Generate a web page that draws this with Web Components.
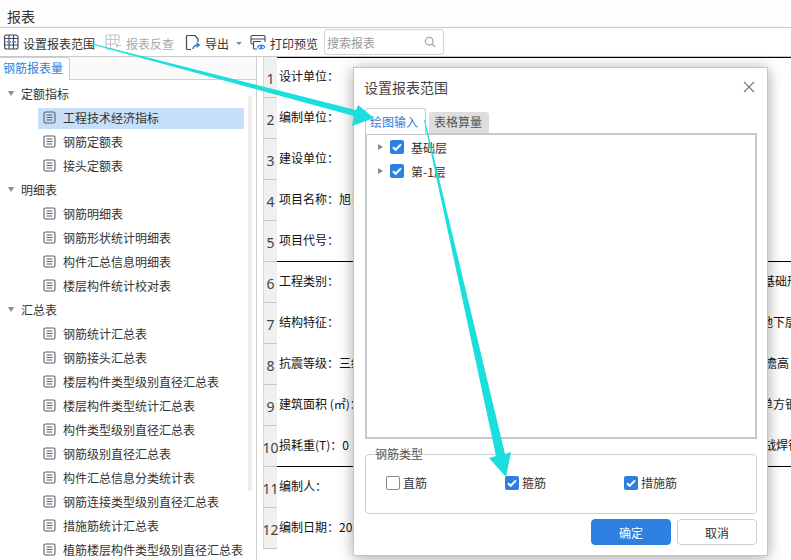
<!DOCTYPE html>
<html lang="zh">
<head>
<meta charset="utf-8">
<title>报表</title>
<style>
    html, body { margin: 0; padding: 0; background: #fff; }
    body { font: 12px "Noto Sans CJK SC", "Liberation Sans", sans-serif; color: #333; }
</style>
</head>
<body>
<report-app></report-app>
<script>
const DOC_ICON = `<svg width="13" height="13" viewBox="0 0 13 13" fill="none" stroke="#5a5f6e" stroke-width="1.1">
    <rect x="1" y="1" width="11" height="11" rx="1.5"/><path d="M3.5 4h6M3.5 6.5h6M3.5 9h6"/></svg>`;

const CHECK_MARK = `<svg width="14" height="14" viewBox="0 0 14 14" fill="none" stroke="#fff" stroke-width="2"><path d="M3 7.2l2.7 2.6L11 4.4"/></svg>`;

const TOOL_ICONS = {
    range: `<svg width="16" height="16" viewBox="0 0 16 16" fill="none" stroke="#40465a" stroke-width="1.1">
        <rect x="1.500" y="1" width="13.500" height="14" rx="2"/><path d="M6 1v14M10.500 1v14M1.500 4.500h13.500M1.500 11h13.500"/>
        <path d="M1.500 8h13.500" stroke="#2d7fe0" stroke-width="1.400" stroke-dasharray="1.500 1"/></svg>`,
    reverse: `<svg width="17" height="16" viewBox="0 0 17 16" fill="none" stroke="#c4c4c4" stroke-width="1.1">
        <path d="M10 15H2a1 1 0 0 1-1-1V2a1 1 0 0 1 1-1h11a1 1 0 0 1 1 1v7M1 5.500h13M1 10h9M5.500 1v14M10 1v9"/>
        <path d="M16 11.500h-5M13 9.500l-2 2 2 2"/></svg>`,
    export: `<svg width="16" height="17" viewBox="0 0 16 17" fill="none" stroke="#40465a" stroke-width="1.2">
        <path d="M6 15.500H2.500a1 1 0 0 1-1-1v-12a1 1 0 0 1 1-1H10l3 3.500v3"/>
        <path d="M8 15c.3-2.500 2-4 5-4M11.500 8.800l2.700 2.200-2.700 2.200" stroke="#2d7fe0" stroke-width="1.600"/></svg>`,
    print: `<svg width="16" height="17" viewBox="0 0 16 17" fill="none" stroke="#40465a" stroke-width="1.1">
        <path d="M3 10H2a1 1 0 0 1-1-1V2.500a1 1 0 0 1 1-1h12a1 1 0 0 1 1 1V8"/><path d="M1 5h14M3.500 7.500h7.500M3.500 7.500V14a1 1 0 0 0 1 1H7"/>
        <path d="M7.500 13c1.500-2.500 6-2.500 7.500 0c-1.500 2.500-6 2.500-7.500 0z" stroke="#2d7fe0"/><circle cx="11.200" cy="13" r="1.200" fill="#2d7fe0" stroke="none"/></svg>`
};

class TitleBar extends HTMLElement {
    constructor() {
        super();
        this.attachShadow({ mode: 'open' }).innerHTML = `
        <style>
            :host {
                display: flex;
                align-items: center;
                height: 28px;
                padding: 5px 0 0 7px;
                box-sizing: border-box;
                font-size: 14px;
                color: #333;
                background: #fdfdfd;
                border-bottom: 1px solid #c9c9c9;
            }
        </style>
        <slot></slot>`;
    }
}

class ToolBtn extends HTMLElement {
    constructor() {
        super();
        this.attachShadow({ mode: 'open' });
    }

    connectedCallback() {
        const disabled = this.hasAttribute('disabled');
        this.shadowRoot.innerHTML = `
        <style>
            :host {
                display: flex;
                align-items: center;
                gap: 4px;
                color: ${disabled ? '#a9a9a9' : '#333'};
                white-space: nowrap;
            }
            svg { display: block; margin-top: -2px; }
        </style>
        ${TOOL_ICONS[this.getAttribute('icon')]}<slot></slot>`;
    }
}

class SearchBox extends HTMLElement {
    constructor() {
        super();
        this.attachShadow({ mode: 'open' }).innerHTML = `
        <style>
            :host {
                display: flex;
                align-items: center;
                justify-content: space-between;
                box-sizing: border-box;
                width: 120px;
                height: 26px;
                margin-top: -2px;
                padding: 0 7px 0 2px;
                border: 1px solid #d5d5d5;
                border-radius: 3px;
                color: #9a9a9a;
            }
        </style>
        <slot></slot>
        <svg width="12" height="12" viewBox="0 0 12 12" fill="none" stroke="#a5a5a5" stroke-width="1.300">
            <circle cx="5.200" cy="5.200" r="3.800"/><path d="M8 8l3 3"/>
        </svg>`;
    }
}

class ToolBar extends HTMLElement {
    constructor() {
        super();
        this.attachShadow({ mode: 'open' }).innerHTML = `
        <style>
            :host {
                display: flex;
                align-items: center;
                box-sizing: border-box;
                height: 29px;
                padding: 2px 0 0 3px;
                border-bottom: 1px solid #c9c9c9;
                background: #fff;
            }
            .caret {
                width: 0;
                height: 0;
                margin: 0 8px 0 7px;
                border: 3px solid transparent;
                border-top: 3.500px solid #888;
                border-bottom: 0;
            }
            tool-btn:nth-of-type(1) { margin-right: 10px; }
            tool-btn:nth-of-type(2) { margin-right: 11px; }
            tool-btn:nth-of-type(4) { margin-right: 6px; }
        </style>
        <tool-btn icon="range">设置报表范围</tool-btn>
        <tool-btn icon="reverse" disabled>报表反查</tool-btn>
        <tool-btn icon="export">导出</tool-btn>
        <span class="caret"></span>
        <tool-btn icon="print">打印预览</tool-btn>
        <search-box>搜索报表</search-box>`;
    }
}

class TreeGroup extends HTMLElement {
    constructor() {
        super();
        this.attachShadow({ mode: 'open' }).innerHTML = `
        <style>
            :host { display: block; }
            .head {
                display: flex;
                align-items: center;
                height: 24px;
                padding-left: 8px;
                gap: 7px;
                color: #333;
            }
            .arrow {
                width: 0;
                height: 0;
                border: 3.500px solid transparent;
                border-top: 5px solid #8a8a8a;
                border-bottom: 0;
            }
        </style>
        <div class="head"><span class="arrow"></span><span id="label"></span></div>
        <slot></slot>`;
    }

    connectedCallback() {
        this.shadowRoot.getElementById('label').textContent = this.getAttribute('label');
    }
}

class TreeItem extends HTMLElement {
    constructor() {
        super();
        this.attachShadow({ mode: 'open' });
    }

    connectedCallback() {
        const selected = this.hasAttribute('selected');
        this.shadowRoot.innerHTML = `
        <style>
            :host {
                display: flex;
                align-items: center;
                height: 24px;
                padding-left: 38px;
                white-space: nowrap;
            }
            .row {
                display: flex;
                align-items: center;
                gap: 7px;
                flex: 1;
                box-sizing: border-box;
                height: 21px;
                margin-top: 2px;
                padding: 0 0 2px 5px;
                margin-right: 4px;
                color: #333;
                background: ${selected ? '#c7dff8' : 'transparent'};
            }
            svg { display: block; }
        </style>
        <div class="row">${DOC_ICON}<slot></slot></div>`;
    }
}

class SidePanel extends HTMLElement {
    constructor() {
        super();
        this.attachShadow({ mode: 'open' }).innerHTML = `
        <style>
            :host {
                display: flex;
                flex-direction: column;
                box-sizing: border-box;
                width: 257px;
                flex: none;
                overflow: hidden;
                border-right: 1px solid #cfcfcf;
            }
            .tabs {
                display: flex;
                height: 23px;
                flex: none;
                box-sizing: border-box;
                background: #fafafa;
                border-bottom: 1px solid #cfcfcf;
            }
            .tab {
                box-sizing: border-box;
                width: 70px;
                height: 23px;
                padding: 1px 0 0 3px;
                color: #2d7fe0;
                background: #fff;
                border: 1px solid #cfcfcf;
                border-width: 1px 1px 0 0;
                border-top-right-radius: 3px;
            }
            .body { display: flex; flex: 1; min-height: 0; }
            .list { width: 248px; flex: none; padding-top: 1px; }
            .scroll { width: 4px; height: 395px; margin-top: 16px; border-radius: 2px; background: #eeeeee; }
        </style>
        <div class="tabs"><div class="tab">钢筋报表量</div></div>
        <div class="body">
            <div class="list"><slot></slot></div>
            <div class="scroll"></div>
        </div>`;
    }
}

class ReportRow extends HTMLElement {
    constructor() {
        super();
        this.attachShadow({ mode: 'open' });
    }

    connectedCallback() {
        const offset = this.getAttribute('offset') || 0;
        this.shadowRoot.innerHTML = `
        <style>
            :host {
                display: flex;
                height: 41px;
                box-sizing: border-box;
                color: #111;
                white-space: nowrap;
            }
            .num {
                flex: none;
                box-sizing: border-box;
                width: 14px;
                padding-top: 3px;
                display: flex;
                align-items: center;
                justify-content: center;
                font: 14px "Noto Sans", sans-serif;
                color: #444;
                background: #f0f0f0;
                border-bottom: 1px solid #c8c8c8;
                border-left: 1px solid #d8d8d8;
            }
            .cell {
                flex: 1;
                display: flex;
                align-items: center;
                padding: 0 0 4px 2px;
                ${this.hasAttribute('rule') ? 'border-bottom: 1px solid #000;' : ''}
                box-sizing: border-box;
                overflow: hidden;
            }
            .left { width: ${480 + Number(offset)}px; flex: none; }
        </style>
        <div class="num">${this.getAttribute('n')}</div>
        <div class="cell">
            <span class="left">${this.getAttribute('left')}</span>
            <span>${this.getAttribute('right') || ''}</span>
        </div>`;
    }
}

class ReportSheet extends HTMLElement {
    constructor() {
        super();
        this.attachShadow({ mode: 'open' }).innerHTML = `
        <style>
            :host {
                display: block;
                flex: 1;
                min-width: 0;
                overflow: hidden;
                margin-left: 6px;
                background: linear-gradient(#000, #000) 14px 0 / 100% 1px no-repeat;
            }
        </style>
        <slot></slot>`;
    }
}

class CheckBox extends HTMLElement {
    constructor() {
        super();
        this.attachShadow({ mode: 'open' });
    }

    connectedCallback() {
        const checked = this.hasAttribute('checked');
        this.shadowRoot.innerHTML = `
        <style>
            :host {
                display: inline-flex;
                align-items: center;
                gap: 3px;
                color: #333;
            }
            .box {
                box-sizing: border-box;
                width: 14px;
                height: 14px;
                border-radius: 2px;
                border: ${checked ? '0' : '1px solid #8a8a8a'};
                background: ${checked ? '#2d7fe0' : '#fff'};
            }
            svg { display: block; }
        </style>
        <span class="box">${checked ? CHECK_MARK : ''}</span><slot></slot>`;
    }
}

class RangeDialog extends HTMLElement {
    constructor() {
        super();
        this.attachShadow({ mode: 'open' }).innerHTML = `
        <style>
            :host {
                position: absolute;
                left: 353px;
                top: 67px;
                width: 415px;
                height: 489px;
                box-sizing: border-box;
                display: block;
                padding: 0 10px 0 11px;
                background: #fff;
                border: 1px solid #c6c6c6;
                box-shadow: 0 2px 14px rgba(0, 0, 0, .35);
                color: #333;
            }
            .title {
                display: flex;
                align-items: center;
                justify-content: space-between;
                height: 38px;
                padding-right: 2px;
                margin-left: -1px;
                font-size: 14px;
                color: #444;
            }
            .tabs { display: flex; align-items: flex-end; height: 26px; margin-top: 1px; gap: 3px; }
            .tab {
                box-sizing: border-box;
                width: 61px;
                height: 26px;
                padding: 4px 0 0 4px;
                margin-bottom: -1px;
                color: #2d7fe0;
                background: #fff;
                border: 1px solid #ccc;
                border-bottom: 0;
                border-radius: 3px 3px 0 0;
                position: relative;
            }
            .tab.off {
                width: 60px;
                height: 21px;
                padding: 1px 0 0 5px;
                margin-bottom: 0;
                color: #555;
                background: #dedede;
                border: 0;
            }
            .frame {
                box-sizing: border-box;
                height: 306px;
                border: 2px solid #c8c8d0;
            }
            .node { display: flex; align-items: center; height: 24px; padding-left: 11px; }
            .node i {
                width: 0;
                height: 0;
                margin-right: 7px;
                border: 3.500px solid transparent;
                border-left: 5px solid #8a8a8a;
                border-right: 0;
            }
            .node check-box { gap: 7px; }
            .group {
                box-sizing: border-box;
                height: 60px;
                margin-top: 15px;
                padding: 0 9px;
                border: 1px solid #cfcfcf;
                border-radius: 4px;
            }
            .legend { display: block; margin-top: -7px; height: 20px; line-height: 12px; color: #555; }
            .options { display: grid; grid-template-columns: 119px 119px 1fr; padding: 6px 0 0 11px; }
            .foot { display: flex; justify-content: flex-end; gap: 6px; margin-top: 5px; }
            .btn {
                box-sizing: border-box;
                display: flex;
                align-items: center;
                justify-content: center;
                width: 80px;
                height: 26px;
                border-radius: 4px;
                border: 1px solid #cfcfcf;
            }
            .btn.primary { color: #fff; background: #2d7fe0; border-color: #2d7fe0; }
        </style>
        <div class="title">
            <span>设置报表范围</span>
            <svg width="12" height="12" viewBox="0 0 12 12" fill="none" stroke="#777" stroke-width="1.100"><path d="M1 1l10 10M11 1L1 11"/></svg>
        </div>
        <div class="tabs"><div class="tab">绘图输入</div><div class="tab off">表格算量</div></div>
        <div class="frame">
            <div class="node"><i></i><check-box checked>基础层</check-box></div>
            <div class="node"><i></i><check-box checked>第-1层</check-box></div>
        </div>
        <div class="group">
            <span class="legend">钢筋类型</span>
            <div class="options">
                <check-box>直筋</check-box>
                <check-box checked>箍筋</check-box>
                <check-box checked>措施筋</check-box>
            </div>
        </div>
        <div class="foot">
            <div class="btn primary">确定</div>
            <div class="btn">取消</div>
        </div>`;
    }
}

class ArrowOverlay extends HTMLElement {
    constructor() {
        super();
        this.attachShadow({ mode: 'open' }).innerHTML = `
        <style>
            :host { position: absolute; left: 0; top: 0; width: 791px; height: 560px; pointer-events: none; }
            svg { display: block; }
        </style>
        <svg width="791" height="560" viewBox="0 0 791 560" fill="#1adfdc">
            <polygon points="92,43.500 356,110 358,105 374,118 352,126 354,116 92,44.500"/>
            <polygon points="424,120 425,120 505,454 511,452 506,477 489,458 496,456"/>
        </svg>`;
    }
}

class ReportApp extends HTMLElement {
    constructor() {
        super();
        this.attachShadow({ mode: 'open' }).innerHTML = `
        <style>
            :host {
                display: block;
                position: relative;
                width: 791px;
                height: 560px;
                overflow: hidden;
                background: #fff;
            }
            .main { display: flex; height: 503px; overflow: hidden; }
        </style>
        <title-bar>报表</title-bar>
        <tool-bar></tool-bar>
        <div class="main">
            <side-panel>
                <tree-group label="定额指标">
                    <tree-item selected>工程技术经济指标</tree-item>
                    <tree-item>钢筋定额表</tree-item>
                    <tree-item>接头定额表</tree-item>
                </tree-group>
                <tree-group label="明细表">
                    <tree-item>钢筋明细表</tree-item>
                    <tree-item>钢筋形状统计明细表</tree-item>
                    <tree-item>构件汇总信息明细表</tree-item>
                    <tree-item>楼层构件统计校对表</tree-item>
                </tree-group>
                <tree-group label="汇总表">
                    <tree-item>钢筋统计汇总表</tree-item>
                    <tree-item>钢筋接头汇总表</tree-item>
                    <tree-item>楼层构件类型级别直径汇总表</tree-item>
                    <tree-item>楼层构件类型统计汇总表</tree-item>
                    <tree-item>构件类型级别直径汇总表</tree-item>
                    <tree-item>钢筋级别直径汇总表</tree-item>
                    <tree-item>构件汇总信息分类统计表</tree-item>
                    <tree-item>钢筋连接类型级别直径汇总表</tree-item>
                    <tree-item>措施筋统计汇总表</tree-item>
                    <tree-item>植筋楼层构件类型级别直径汇总表</tree-item>
                </tree-group>
            </side-panel>
            <report-sheet>
                <report-row n="1" left="设计单位："></report-row>
                <report-row n="2" left="编制单位："></report-row>
                <report-row n="3" left="建设单位："></report-row>
                <report-row n="4" left="项目名称：旭日"></report-row>
                <report-row n="5" left="项目代号：" rule></report-row>
                <report-row n="6" left="工程类别：" right="基础形式" offset="4"></report-row>
                <report-row n="7" left="结构特征：" right="地下层" offset="2"></report-row>
                <report-row n="8" left="抗震等级：三级" right="檐高" offset="6"></report-row>
                <report-row n="9" left="建筑面积 (㎡)：" right="单方钢" offset="2"></report-row>
                <report-row n="10" left="损耗重(T)：0" right="战焊钢" offset="5" rule></report-row>
                <report-row n="11" left="编制人："></report-row>
                <report-row n="12" left="编制日期：2024"></report-row>
            </report-sheet>
        </div>
        <range-dialog></range-dialog>
        <arrow-overlay></arrow-overlay>`;
    }
}

customElements.define('title-bar', TitleBar);
customElements.define('tool-btn', ToolBtn);
customElements.define('search-box', SearchBox);
customElements.define('tool-bar', ToolBar);
customElements.define('tree-group', TreeGroup);
customElements.define('tree-item', TreeItem);
customElements.define('side-panel', SidePanel);
customElements.define('report-row', ReportRow);
customElements.define('report-sheet', ReportSheet);
customElements.define('check-box', CheckBox);
customElements.define('range-dialog', RangeDialog);
customElements.define('arrow-overlay', ArrowOverlay);
customElements.define('report-app', ReportApp);
</script>
</body>
</html>
